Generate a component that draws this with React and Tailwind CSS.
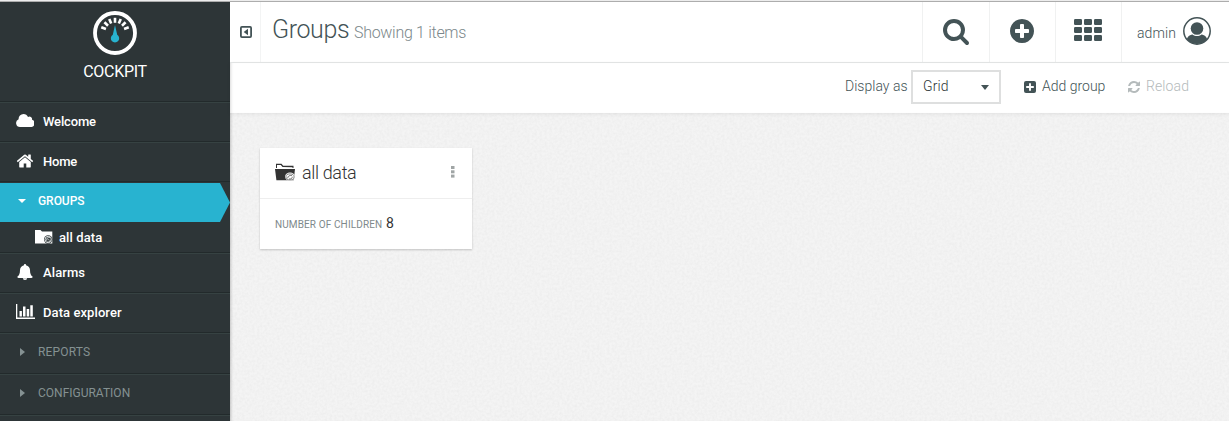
import React from 'react';

const Fa = ({ d, className }) => (
  <svg viewBox="0 0 1792 1792" className={className} fill="currentColor">
    <path d={d} />
  </svg>
);

const SEARCH =
  'M1216 832q0-185-131.5-316.5t-316.5-131.5-316.5 131.5-131.5 316.5 131.5 316.5 316.5 131.5 316.5-131.5 131.5-316.5zm512 832q0 52-38 90t-90 38q-54 0-90-38l-343-342q-179 124-399 124-143 0-273.5-55.5t-225-150-150-225-55.5-273.5 55.5-273.5 150-225 225-150 273.5-55.5 273.5 55.5 225 150 150 225 55.5 273.5q0 220-124 399l343 343q37 37 37 90z';
const PLUS =
  'M1344 960v-128q0-26-19-45t-45-19h-256v-256q0-26-19-45t-45-19h-128q-26 0-45 19t-19 45v256h-256q-26 0-45 19t-19 45v128q0 26 19 45t45 19h256v256q0 26 19 45t45 19h128q26 0 45-19t19-45v-256h256q26 0 45-19t19-45zm320-64q0 209-103 385.5t-279.5 279.5-385.5 103-385.5-103-279.5-279.5-103-385.5 103-385.5 279.5-279.5 385.5-103 385.5 103 279.5 279.5 103 385.5z';
const HOME =
  'M1472 992v480q0 26-19 45t-45 19h-384v-384h-256v384h-384q-26 0-45-19t-19-45v-480q0-1 .5-3t.5-3l575-474 575 474q1 2 1 6zm223-69l-62 74q-8 9-21 11h-3q-13 0-21-7l-692-577-692 577q-12 8-24 7-13-2-21-11l-62-74q-8-10-7-23.5t11-21.5l719-599q32-26 76-26t76 26l244 204v-195q0-14 9-23t23-9h192q14 0 23 9t9 23v408l219 182q10 8 11 21.5t-7 23.5z';
const REFRESH =
  'M1639 1056q0 5-1 7-64 268-268 434.5t-478 166.5q-146 0-282.5-55t-243.5-157l-129 129q-19 19-45 19t-45-19-19-45v-448q0-26 19-45t45-19h448q26 0 45 19t19 45-19 45l-137 137q71 66 161 102t187 36q134 0 250-65t186-179q11-17 53-117 8-23 30-23h192q13 0 22.5 9.5t9.5 22.5zm25-800v448q0 26-19 45t-45 19h-448q-26 0-45-19t-19-45 19-45l138-138q-148-137-349-137-134 0-250 65t-186 179q-11 17-53 117-8 23-30 23h-199q-13 0-22.5-9.5t-9.5-22.5v-7q65-268 270-434.5t480-166.5q146 0 284 55.5t245 156.5l130-129q19-19 45-19t45 19 19 45z';

const Gauge = () => (
  <svg viewBox="0 0 44 44" className="h-11 w-11">
    <circle cx="22" cy="22" r="20" fill="none" stroke="#fff" strokeWidth="3.8" />
    <g stroke="#fff" strokeWidth="2.6">
      {[-69, -46, -23, 0, 23, 46, 69].map((a) => (
        <path key={a} d="M22 6.8v5" transform={`rotate(${a} 22 21.5)`} />
      ))}
    </g>
    <path d="M22 14l2.2 9.8a4.2 4.2 0 1 1-4.4 0z" fill="#28b3d0" />
  </svg>
);

const Cloud = () => (
  <svg viewBox="0 0 18 13" className="mb-[3px] h-[13px] w-[18px]" fill="currentColor">
    <path d="M4 13A4 4 0 0 1 2.6 5.3 5 5 0 0 1 7.500 0a5 5 0 0 1 4.500 3 2.600 2.600 0 0 1 4 2.800A3.700 3.700 0 0 1 14.500 13z" />
  </svg>
);

const Bell = () => (
  <svg viewBox="0 0 16 16" className="mb-[2px] h-4 w-4" fill="currentColor">
    <path d="M8 0a1 1 0 0 1 1 1.200C11.500 1.700 13 3.700 13 6c0 3.600.9 5.400 2.700 6.800 0 .7-.5 1.200-1.200 1.200h-13C.8 14 .3 13.500.3 12.800 2.100 11.400 3 9.600 3 6c0-2.300 1.500-4.300 4-4.800A1 1 0 0 1 8 0zM5.800 14.300h4.400a2.200 1.700 0 0 1-4.400 0z" />
  </svg>
);

const Chart = () => (
  <svg viewBox="0 0 19 15" className="mb-[3px] h-[15px] w-[19px]" fill="currentColor">
    <path d="M0 0h1.300v13.600H19V15H0zM3.500 7h2.400v5.500H3.500zM7 2.500h2.500v10H7zM10.700 5h2.500v7.500h-2.500zM14.300 1.300h2.500v11.200h-2.500z" />
  </svg>
);

const Folder = () => (
  <svg viewBox="0 0 18 14" className="mb-px h-[14px] w-[18px]">
    <path d="M0 0h5.500l1.500 1.600h10.300V13.500H0z" fill="#fff" />
    <circle cx="13.200" cy="9.500" r="4.200" fill="#2d3537" />
    <circle cx="13.200" cy="9.500" r="3.200" fill="none" stroke="#dfe3e3" strokeWidth="1" />
    <path d="M11.200 10.800c0-2.500 1.200-3.300 3.700-3.300M12.200 12c2.500.2 3-.8 2.900-2.500M12.500 9.700h1.300" fill="none" stroke="#dfe3e3" strokeWidth=".9" />
  </svg>
);

const OpenFolder = () => (
  <svg viewBox="0 0 20 18" className="mb-[2px] h-[18px] w-5">
    <path d="M1 5V.8h5.500l1.700 1.900h10.300V5h-1V4.200L7.500 4 5.800 2H2v3z" fill="#333" />
    <path d="M0 6h20l-1.300 11.200H1.400z" fill="#333" />
    <ellipse cx="15" cy="13.700" rx="5" ry="4.100" fill="#fff" />
    <ellipse cx="15" cy="13.900" rx="4.100" ry="3" fill="none" stroke="#666" strokeWidth=".8" />
    <path d="M12.700 15.300c0-2.300 1.600-2.900 4.300-2.900M14 16c2.600 0 3.300-.8 3.200-2.300" fill="none" stroke="#555" strokeWidth=".8" />
  </svg>
);

const User = () => (
  <svg viewBox="0 0 28 28" className="mb-[2px] h-7 w-7">
    <clipPath id="user-disc"><circle cx="14" cy="14" r="13" /></clipPath>
    <circle cx="14" cy="14" r="13.200" fill="#fff" stroke="#435356" strokeWidth="1.500" />
    <g clipPath="url(#user-disc)" fill="#435356">
      <path d="M3 25c1-5 3-7 6.500-7.500 2.800 2 6.200 2 9 0 3.500.5 5.500 2.500 6.500 7.500l-4 4H7z" />
      <circle cx="14" cy="11.500" r="6.300" />
    </g>
  </svg>
);

const Grain = () => (
  <svg className="pointer-events-none absolute inset-0 h-full w-full" aria-hidden="true">
    <filter id="grain" x="0" y="0" width="100%" height="100%">
      <feTurbulence type="fractalNoise" baseFrequency="0.4" numOctaves="2" seed="4" />
      <feColorMatrix values="0 0 0 0 0  0 0 0 0 0  0 0 0 0 0  0.05 0 0 0 -0.015" />
    </filter>
    <rect width="100%" height="100%" filter="url(#grain)" />
  </svg>
);

const line = 'border-b border-b-[#222a2b] border-t border-t-[#364242]';
const label = 'whitespace-nowrap font-medium text-white text-[13px]';

const Row = ({ icon, text, spacing, height }) => (
  <div className={`flex items-center pl-[15px] ${height} ${line}`}>
    <span className="mr-[8px] flex w-5 justify-center text-white">{icon}</span>
    <span className={`${label} ${spacing}`}>{text}</span>
  </div>
);

const Section = ({ text, spacing }) => (
  <div className={`flex h-[41px] items-center pl-5 pb-1 text-[#849192] ${line}`}>
    <svg viewBox="0 0 5 8" className="h-2 w-[5px]" fill="currentColor"><path d="M0 0l5 4-5 4z" /></svg>
    <span className={`ml-[13px] whitespace-nowrap text-[12px] ${spacing}`}>{text}</span>
  </div>
);

const Sidebar = () => (
  <aside className="flex w-[230px] shrink-0 flex-col bg-[#2d3537]">
    <div className="flex h-[100px] flex-col items-center border-b border-b-[#222a2b] pt-[9px]">
      <Gauge />
      <span className="mt-[5px] text-[16px] leading-6 tracking-[-0.3px] text-white">COCKPIT</span>
    </div>
    <Row height="h-10" icon={<Cloud />} text="Welcome" spacing="tracking-[-0.15px]" />
    <Row height="h-10" icon={<Fa d={HOME} className="mb-[3px] h-[18px] w-[18px]" />} text="Home" spacing="tracking-[-0.2px]" />
    <div className="mt-px flex h-[39px] items-center bg-[#28b3d0] pb-[3px] pl-[18px] text-white [clip-path:polygon(0_0,220px_0,230px_50%,220px_100%,0_100%)]">
      <svg viewBox="0 0 8 4" className="h-1 w-2" fill="currentColor"><path d="M0 0h8L4 4z" /></svg>
      <span className="ml-3 whitespace-nowrap text-[12px] font-medium tracking-[-0.05px]">GROUPS</span>
    </div>
    <div className="flex h-[31px] items-center border-b border-b-[#222a2b] pl-[35px]">
      <Folder />
      <span className={`ml-[6px] pt-px tracking-[0.1px] ${label}`}>all data</span>
    </div>
    <Row height="h-10" icon={<Bell />} text="Alarms" spacing="tracking-[0.1px]" />
    <Row height="h-10" icon={<Chart />} text="Data explorer" spacing="tracking-[0.08px]" />
    <Section text="REPORTS" spacing="tracking-[0.15px]" />
    <Section text="CONFIGURATION" spacing="tracking-[0px]" />
    <div className="grow border-t border-t-[#364242]" />
  </aside>
);

const Header = () => (
  <header className="flex h-[61px] border-b border-[#e5e7e7] bg-white text-[#435356]">
    <div className="flex w-[31px] shrink-0 items-center justify-center border-r border-[#f3f4f4] pl-px">
      <svg viewBox="0 0 12 12" className="h-3 w-3">
        <rect x=".9" y=".9" width="10.200" height="10.200" rx="1" fill="none" stroke="#435356" strokeWidth="1.800" />
        <path d="M8 2.800v6.400L3.700 6z" fill="#435356" />
      </svg>
    </div>
    <h1 className="ml-[11px] flex grow items-baseline whitespace-nowrap pt-[10px]">
      <span className="w-[76px] text-[25px] font-light leading-9 tracking-[-0.4px]">Groups</span>
      <span className="ml-[6px] text-[16px] font-light tracking-[-0.3px] text-[#7b878a]">Showing 1 items</span>
    </h1>
    <div className="flex w-[67px] items-center justify-center border-l border-[#f0f1f1] pb-[2px]"><Fa d={SEARCH} className="h-7 w-7" /></div>
    <div className="flex w-[66px] items-center justify-center border-l border-[#f0f1f1] pb-[2px] pr-px"><Fa d={PLUS} className="h-7 w-7" /></div>
    <div className="flex w-[66px] items-center justify-center border-l border-[#f0f1f1] pb-[4px] pr-[2px]">
      <svg viewBox="0 0 28 22" className="h-[22px] w-7" fill="currentColor">
        {[0, 8, 16].map((y) => [0, 10, 20].map((x) => <rect key={`${x}-${y}`} x={x} y={y} width="8" height="6" rx="1.200" />))}
      </svg>
    </div>
    <div className="flex w-[108px] items-center border-l border-[#f0f1f1] pl-[15px]">
      <span className="w-[46px] whitespace-nowrap pt-[3px] text-[14px] font-light tracking-[0.1px]">admin</span>
      <User />
    </div>
  </header>
);

const Toolbar = () => (
  <div className="relative z-10 flex h-[50px] items-center justify-end bg-white pr-[39px] text-[14px] text-[#435356] shadow-[inset_3px_0_3px_-2px_rgba(0,0,0,0.15),0_1px_4px_rgba(0,0,0,0.07)]">
    <span className="w-[66px] whitespace-nowrap pb-[3px] font-light tracking-[0.02px]">Display as</span>
    <div className="mb-[2px] flex h-[34px] w-[90px] items-center justify-between border-2 border-[#dedfdf] pl-[10px] pr-[10px]">
      <span className="pb-px font-light tracking-[0.1px] text-[#2d3537]">Grid</span>
      <svg viewBox="0 0 8 4" className="h-[5px] w-2" preserveAspectRatio="none" fill="currentColor"><path d="M0 0h8L4 4z" /></svg>
    </div>
    <div className="ml-[23px] flex w-[103px] items-center pb-[3px]">
      <svg viewBox="0 0 12 12" className="h-3 w-3">
        <rect width="12" height="12" rx="2" fill="#435356" />
        <path d="M6 2.200v7.600M2.200 6h7.600" stroke="#fff" strokeWidth="1.900" />
      </svg>
      <span className="ml-[6px] whitespace-nowrap font-light">Add group</span>
    </div>
    <div className="flex w-[63px] items-center pb-[3px] text-[#b4babb]">
      <Fa d={REFRESH} className="h-[14px] w-[14px]" />
      <span className="ml-[5px] whitespace-nowrap font-light tracking-[0.1px]">Reload</span>
    </div>
  </div>
);

const Card = () => (
  <div className="relative h-[101px] w-[212px] bg-white shadow-[0_1px_2px_rgba(0,0,0,0.2)]">
    <div className="flex h-[51px] items-center border-b border-[#eeeeee] px-[15px] text-[#333]">
      <OpenFolder />
      <span className="ml-[7px] grow whitespace-nowrap pb-[2px] text-[18px] font-light tracking-[-0.35px]">all data</span>
      <svg viewBox="0 0 4 12" className="mb-[3px] mr-[2px] h-3 w-1" fill="#a0a5a5">
        <rect width="3.500" height="3" /><rect y="4.300" width="3.500" height="3" /><rect y="8.600" width="3.500" height="3" />
      </svg>
    </div>
    <div className="flex items-baseline whitespace-nowrap px-[15px] pt-[14px] leading-5">
      <span className="w-[111px] text-[10px] tracking-[0.12px] text-[#7e898b]">NUMBER OF CHILDREN</span>
      <span className="text-[14px] text-[#333]">8</span>
    </div>
  </div>
);

export default function App() {
  return (
    <div className="flex h-[421px] w-[1229px] flex-col overflow-hidden bg-white font-['Roboto',sans-serif]">
      <div className="h-[2px] shrink-0 border-b border-[#adadad] bg-[#ededed]" />
      <div className="flex min-h-0 grow">
        <Sidebar />
        <main className="flex min-w-0 grow flex-col bg-[#f4f4f4]">
          <Header />
          <Toolbar />
          <div className="relative grow pl-[30px] pt-[35px] shadow-[inset_3px_0_3px_-2px_rgba(0,0,0,0.2)]">
            <Grain />
            <Card />
          </div>
        </main>
      </div>
    </div>
  );
}
